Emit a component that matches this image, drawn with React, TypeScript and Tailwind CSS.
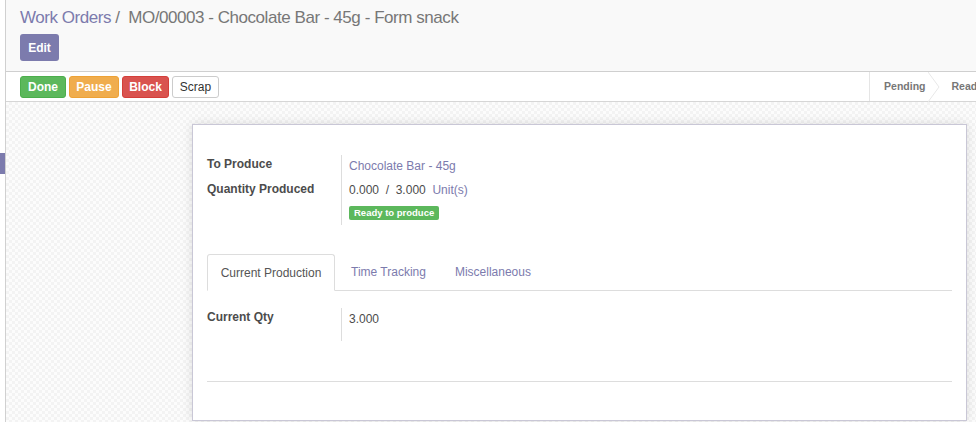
import React from "react";

export default function App() {
  const font = { fontFamily: '"Liberation Sans", Arial, sans-serif' };
  return (
    <div className="w-[976px] h-[422px] overflow-hidden relative bg-white" style={font}>
      <div className="absolute left-0 top-[153px] w-[5px] h-[21px] bg-[#7c7bad]" />
      <div className="ml-[5px] h-full border-l border-[#d0d0d0] flex flex-col">
        {/* control panel */}
        <div className="h-[72px] bg-[#f9f9f9] border-b border-[#cfcfcf] pl-[14px] pt-[8px]">
          <div className="text-[17px] leading-[20px] tracking-[-0.45px] text-[#7c7bad] whitespace-nowrap">
            <span>Work Orders</span>
            <span className="text-[#777]"> /&nbsp;&nbsp;</span>
            <span className="text-[#777]">MO/00003 - Chocolate Bar - 45g - Form snack</span>
          </div>
          <button className="mt-[6px] w-[39px] h-[27px] rounded-[3px] bg-[#7c7bad] text-white text-[12px] font-bold leading-none">
            Edit
          </button>
        </div>
        {/* status bar */}
        <div className="h-[30px] bg-white border-b border-[#d6d6d6] flex items-center pl-[14px]">
          <div className="flex gap-[3px]">
            <button className="h-[22px] w-[46px] rounded-[3px] bg-[#5cb85c] border border-[#4cae4c] text-white text-[12px] font-bold">Done</button>
            <button className="h-[22px] w-[50px] rounded-[3px] bg-[#f0ad4e] border border-[#eea236] text-white text-[12px] font-bold">Pause</button>
            <button className="h-[22px] w-[47px] rounded-[3px] bg-[#d9534f] border border-[#d43f3a] text-white text-[12px] font-bold">Block</button>
            <button className="h-[22px] w-[47px] rounded-[3px] bg-white border border-[#ccc] text-[#333] text-[12px]">Scrap</button>
          </div>
          <div className="ml-auto mr-[-21px] h-full flex items-stretch border-l border-[#e5e5e5]">
            <div className="relative flex items-center pl-[14px] pr-[9px] text-[10.5px] font-bold text-[#777]">
              Pending
              <svg className="absolute right-[-6px] top-0" width="12" height="30" viewBox="0 0 12 30">
                <path d="M0 0 L11 15 L0 30" fill="none" stroke="#e8e8e8" strokeWidth="1" />
              </svg>
            </div>
            <div className="flex items-center pl-[17px] pr-[14px] text-[10.5px] font-bold text-[#777] whitespace-nowrap">
              Ready
            </div>
          </div>
        </div>
        {/* content */}
        <div className="flex-1 bg-[repeating-conic-gradient(#f3f3f3_0_25%,#fcfcfc_0_50%)] bg-[length:6px_6px] pt-[22px] pl-[186px] pr-[9px]">
          <div className="h-[297px] bg-white border border-[#c9c7d6] shadow-[0_0_10px_rgba(0,0,0,0.12)] px-[14px] pt-[30px]">
            <div className="flex text-[12px]">
              <div className="w-[135px] border-r border-[#ddd] text-[#4c4c4c] font-bold">
                <div className="h-[24px]">To Produce</div>
                <div className="h-[24px] pt-[1px]">Quantity Produced</div>
                <div className="h-[22px]" />
              </div>
              <div className="pl-[7px] text-[#4c4c4c]">
                <div className="h-[24px] pt-[2px] text-[#7c7bad]">Chocolate Bar - 45g</div>
                <div className="h-[24px] pt-[2px]">
                  0.000&nbsp;&nbsp;/&nbsp;&nbsp;3.000&nbsp; <span className="text-[#7c7bad]">Unit(s)</span>
                </div>
                <div className="inline-block bg-[#5cb85c] text-white text-[9.5px] font-bold px-[5px] h-[14px] leading-[14px] rounded-[2px]">
                  Ready to produce
                </div>
              </div>
            </div>
            {/* tabs */}
            <div className="mt-[29px] flex border-b border-[#ddd] h-[37px] text-[12px]">
              <div className="w-[128px] h-[37px] border border-[#ddd] border-b-white rounded-t-[3px] bg-white flex items-center justify-center text-[#555] -mb-px">
                Current Production
              </div>
              <div className="px-[16px] flex items-center text-[#7c7bad]">Time Tracking</div>
              <div className="px-[13px] flex items-center text-[#7c7bad]">Miscellaneous</div>
            </div>
            <div className="mt-[17px] flex text-[12px]">
              <div className="w-[135px] border-r border-[#ddd] text-[#4c4c4c] font-bold h-[33px]">Current Qty</div>
              <div className="pl-[7px] pt-[2px] text-[#4c4c4c]">3.000</div>
            </div>
            <div className="mt-[40px] border-t border-[#ddd]" />
          </div>
        </div>
      </div>
    </div>
  );
}
